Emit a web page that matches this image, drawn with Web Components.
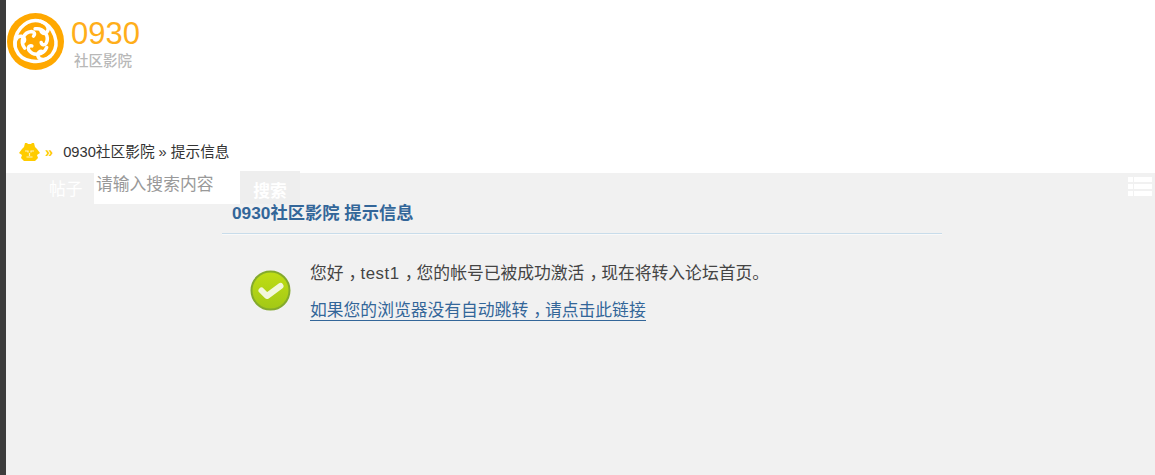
<!DOCTYPE html>
<html lang="zh-CN"><head><meta charset="utf-8"><title>提示信息</title>
<style>
html,body{margin:0;padding:0;height:100%;background:#f1f1f1;overflow:hidden}
body{font-family:"Liberation Sans","Noto Sans CJK SC",sans-serif}
.c{padding-left:5px;letter-spacing:-5px}
.w{letter-spacing:.6px}
.u{border-bottom:1px solid #336699}
</style></head><body>
<app-page>
  <site-header slot="header"></site-header>
  <search-bar slot="bar"></search-bar>
  <message-box slot="main">
    <span slot="title">0930社区影院 提示信息</span>
    <span slot="line">您好<span class="c">，</span><span class="w">test1</span><span class="c">，</span>您的帐号已被成功激活<span class="c">，</span>现在将转入论坛首页。</span>
    <span slot="link" class="u">如果您的浏览器没有自动跳转<span class="c">，</span>请点击此链接</span>
  </message-box>
</app-page>
<script>
function def(name,html){customElements.define(name,class extends HTMLElement{constructor(){super();this.attachShadow({mode:'open'}).innerHTML=html}})}
def('app-page',`<style>
:host{display:grid;grid-template-columns:6px 1fr;height:475px;width:1155px}
.strip{background:#3c3c3c}
.col{display:flex;flex-direction:column;min-width:0;background:#f1f1f1}
</style><div class="strip"></div><div class="col"><slot name="header"></slot><slot name="bar"></slot><slot name="main"></slot></div>`);
const arm=`<path d="M13 32C11 22 20 11 30 12.500C36 13.500 39 18 36.500 21C34.500 23 32 21.500 32 19.500"/><path d="M20 33C16 28 19 21 25 20.500C27 20.500 28 22.500 26.500 24"/>`;
def('site-header',`<style>
:host{display:flex;flex-direction:column;height:173px;background:#fff;box-sizing:border-box;color:#333}
.logo{display:flex;height:137px;padding:13px 0 0 1px;box-sizing:border-box;gap:7px}
.mark{width:57px;height:57px;flex:none;filter:blur(.35px)}
.names{display:flex;flex-direction:column;align-items:flex-start}
.num{font:31px/36px "Liberation Sans",sans-serif;color:#ffae1a;margin-top:3px}
.sub{font:500 14.500px/17px "Noto Sans CJK SC",sans-serif;color:#b8b8b8;margin:-1px 0 0 3px}
.crumbs{display:flex;align-items:center;height:30px;padding:0 0 0 13px;font:14.7px/30px "Liberation Sans","Noto Sans CJK SC",sans-serif}
.arrow{color:#ffcc00;margin:0 10px 0 5px;font-weight:bold}
.lion{width:21px;height:18px;flex:none}
.sep{margin:0 4px}
</style>
<div class="logo">
<svg class="mark" viewBox="0 0 56 56">
<circle cx="28" cy="28" r="28" fill="#ffa800"/>
<g fill="none" stroke="#fff" stroke-width="2.600" stroke-linecap="round" transform="translate(28 28) scale(1.32) translate(-28 -28)">
<g>${arm}</g><g transform="rotate(120 28 28)">${arm}</g><g transform="rotate(240 28 28)">${arm}</g>
</g></svg>
<div class="names"><div class="num">0930</div><div class="sub">社区影院</div></div>
</div>
<div class="crumbs">
<svg class="lion" viewBox="0 0 21 18"><path d="M6 0h2l1 1h3l1-1h2l1 4 2 2 3 4-3 2 1 3-3 3H5l-3-3 1-3-3-2 3-4 2-2z" fill="#ffcc00"/><path d="M6 8h3v1.500M15 8h-3v1.500M10.500 10v3M7.500 14h6" stroke="#fff2c0" stroke-width="1.200" fill="none"/></svg>
<span class="arrow">»</span><span>0930社区影院</span><span class="sep">»</span><span>提示信息</span>
</div>`);
def('search-bar',`<style>
:host{display:block;height:0;position:relative;z-index:1}
.row{display:flex;align-items:flex-start;position:absolute;left:0;top:-2px;width:100%}
.lab{width:88px;box-sizing:border-box;padding:7px 0 0 43px;color:#fff;font:16.8px/20px "Noto Sans CJK SC",sans-serif}
.inp{width:146px;height:32px;margin-top:1px;background:#fff;box-sizing:border-box;padding:0 2px;color:#999;font:16.8px/22px "Noto Sans CJK SC",sans-serif}
.btn{width:60px;height:33px;background:#eeeeee;color:#fff;font:bold 16.8px/38px "Noto Sans CJK SC",sans-serif;text-align:center}
.menu{margin:6px 3px 0 auto;width:24px;height:19px;flex:none}
</style><div class="row"><span class="lab">帖子</span><div class="inp">请输入搜索内容</div><div class="btn">搜索</div>
<svg class="menu" viewBox="0 0 24 19" fill="#fff"><rect width="5" height="5"/><rect x="6" width="18" height="5"/><rect y="7" width="5" height="5"/><rect x="6" y="7" width="18" height="5"/><rect y="14" width="5" height="5"/><rect x="6" y="14" width="18" height="5"/></svg></div>`);
def('message-box',`<style>
:host{display:block;margin-left:216px;width:720px;font-family:"Liberation Sans","Noto Sans CJK SC",sans-serif}
.t{height:61px;box-sizing:border-box;padding:28px 0 0 10px;font:bold 17.3px/24px "Liberation Sans","Noto Sans CJK SC",sans-serif;color:#336699;border-bottom:1px solid #c8dcea;box-shadow:0 1px 0 #f9f9f9}
.b{display:flex;padding:25px 0 0 28px}
.ic{width:41px;height:41px;flex:none;margin:11px 19px 0 0}
.l{font-size:16.8px;line-height:30px;color:#444}
.k{font-size:16.8px;line-height:30px;color:#336699;margin-top:7px}
</style><div class="t"><slot name="title"></slot></div>
<div class="b"><svg class="ic" viewBox="0 0 41 41"><defs><linearGradient id="g" x1="0" y1="0" x2="0" y2="1"><stop offset="0" stop-color="#c0de14"/><stop offset="1" stop-color="#a2c816"/></linearGradient></defs><circle cx="20.500" cy="20.500" r="19" fill="url(#g)" stroke="#84aa2c" stroke-width="2"/><path d="M11.500 20.500l5.500 5.500 13.500-10" fill="none" stroke="#f2f7dc" stroke-width="6" stroke-linecap="round" stroke-linejoin="round"/></svg>
<div><div class="l"><slot name="line"></slot></div><div class="k"><slot name="link"></slot></div></div></div>`);
</script></body></html>
